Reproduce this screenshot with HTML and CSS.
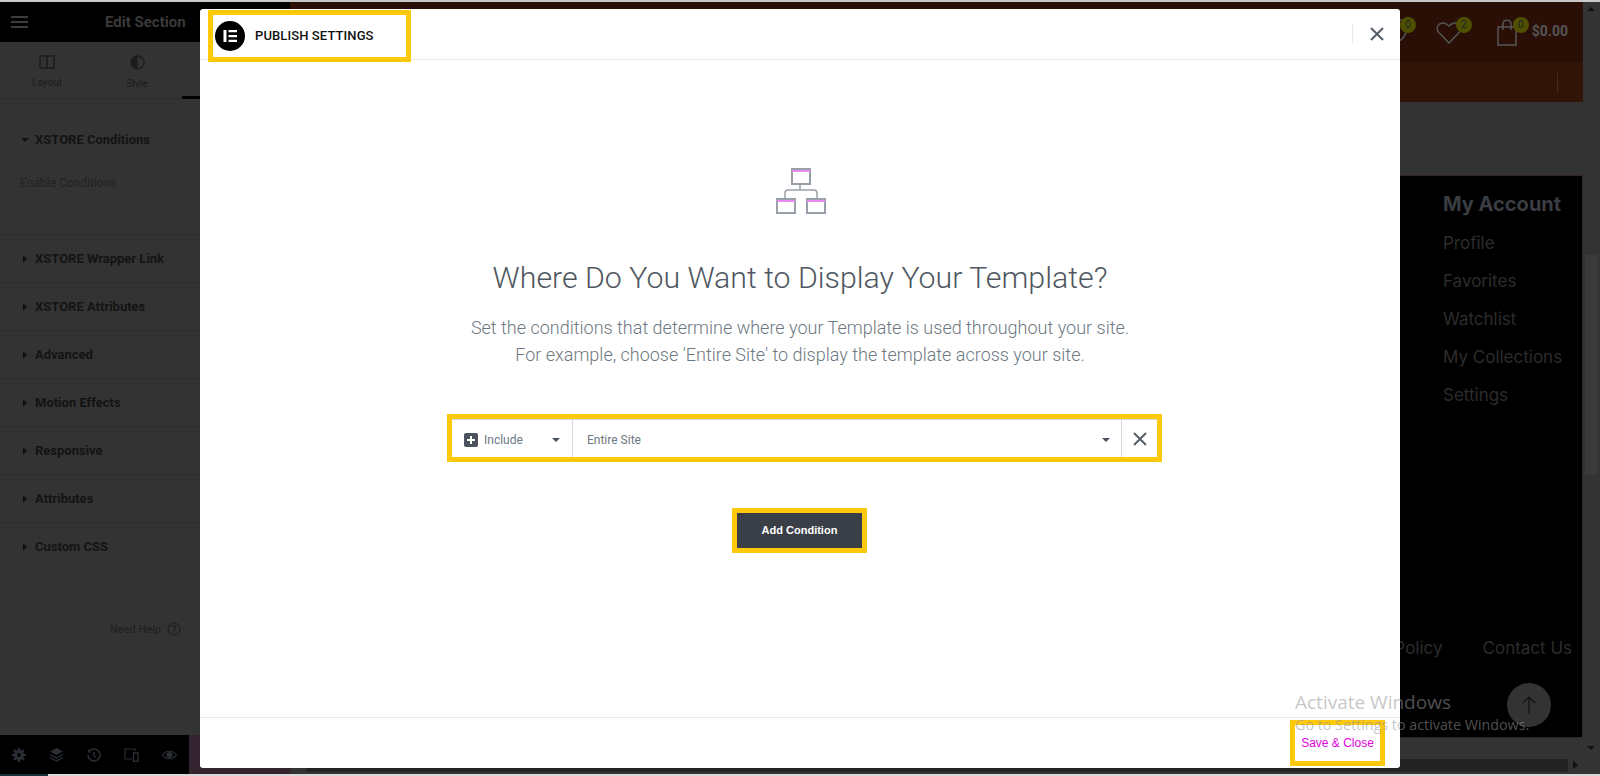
FILE: index.html
```html
<!DOCTYPE html>
<html lang="en">
<head>
    <meta charset="UTF-8">
    <title>Publish Settings</title>
    <link rel="stylesheet" href="styles.css">
</head>
<body>
    <div class="screen">
        <!-- Editor panel -->
        <aside class="panel">
            <div class="panel-head">
                <svg class="burger" width="17" height="12" viewBox="0 0 17 12"><path d="M0 1h17M0 6h17M0 11h17" stroke="#3c3c3c" stroke-width="2"/></svg>
                <span class="panel-title">Edit Section</span>
            </div>
            <div class="tabs">
                <div class="tab">
                    <svg width="16" height="14" viewBox="0 0 16 14"><path d="M1 1h14v12H1zM8 1v12" fill="none" stroke="#1c1c1c" stroke-width="1.5"/></svg>
                    <span>Layout</span>
                </div>
                <div class="tab">
                    <svg width="15" height="15" viewBox="0 0 15 15"><circle cx="7.5" cy="7.5" r="6.5" fill="none" stroke="#1c1c1c" stroke-width="1.4"/><path d="M7.5 1a6.5 6.5 0 0 0 0 13z" fill="#1c1c1c"/></svg>
                    <span>Style</span>
                </div>
                <div class="tab tab-active"></div>
            </div>
            <div class="section section-open">
                <div class="section-label"><i class="caret-down"></i>XSTORE Conditions</div>
                <div class="control-label">Enable Conditions</div>
            </div>
            <div class="section"><div class="section-label"><i class="caret-right"></i>XSTORE Wrapper Link</div></div>
            <div class="section"><div class="section-label"><i class="caret-right"></i>XSTORE Attributes</div></div>
            <div class="section"><div class="section-label"><i class="caret-right"></i>Advanced</div></div>
            <div class="section"><div class="section-label"><i class="caret-right"></i>Motion Effects</div></div>
            <div class="section"><div class="section-label"><i class="caret-right"></i>Responsive</div></div>
            <div class="section"><div class="section-label"><i class="caret-right"></i>Attributes</div></div>
            <div class="section section-last"><div class="section-label"><i class="caret-right"></i>Custom CSS</div></div>
            <div class="need-help">
                <span>Need Help</span>
                <svg width="14" height="14" viewBox="0 0 14 14"><circle cx="7" cy="7" r="6" fill="none" stroke="#1f1f1f" stroke-width="1.1"/><path d="M5.2 5.4C5.3 3 8.8 3.2 8.8 5.3c0 1.500-1.800 1.400-1.800 3M7 9.500v1.200" fill="none" stroke="#1f1f1f" stroke-width="1.100"/></svg>
            </div>
            <div class="panel-foot">
                <div class="foot-icons">
                    <svg width="14" height="14" viewBox="0 0 14 14"><circle cx="7" cy="7" r="3.500" fill="none" stroke="#2a2f35" stroke-width="3"/><path d="M7 0v3M7 11v3M0 7h3M11 7h3M2 2l2 2M10 10l2 2M12 2l-2 2M4 10l-2 2" stroke="#2a2f35" stroke-width="2.200"/></svg>
                    <svg width="15" height="15" viewBox="0 0 15 15"><path d="M7.500 1L14 4.500 7.500 8 1 4.500z" fill="#2a2f35"/><path d="M1 7.500L7.500 11 14 7.500M1 10.500L7.500 14 14 10.500" fill="none" stroke="#2a2f35" stroke-width="1.300"/></svg>
                    <svg width="14" height="14" viewBox="0 0 14 14"><path d="M2.500 3A6 6 0 1 1 1 7" fill="none" stroke="#2a2f35" stroke-width="1.500"/><path d="M1 1v3.500h3.500z" fill="#2a2f35"/><path d="M7 4v3.500l2 1.500" fill="none" stroke="#2a2f35" stroke-width="1.500"/></svg>
                    <svg width="15" height="14" viewBox="0 0 15 14"><path d="M1 10V1h10v2M0 11h8" fill="none" stroke="#2a2f35" stroke-width="1.200"/><path d="M9.500 5h4.500v8.500H9.500z" fill="none" stroke="#2a2f35" stroke-width="1.300"/></svg>
                    <svg width="15" height="10" viewBox="0 0 15 10"><path d="M.5 5C4 0 11 0 14.500 5 11 10 4 10 .5 5z" fill="none" stroke="#2a2f35" stroke-width="1.200"/><circle cx="7.500" cy="5" r="3" fill="#2a2f35"/></svg>
                </div>
            </div>
        </aside>

        <!-- Site preview behind the modal -->
        <main class="site">
            <div class="site-view">
                <header class="site-top">
                    <svg class="user-icon" width="26" height="26" viewBox="0 0 26 26"><circle cx="13" cy="13" r="12" fill="none" stroke="#555" stroke-width="1.500"/></svg>
                    <span class="icon-wrap heart">
                        <svg width="26" height="24" viewBox="0 0 26 24"><path d="M13 23L2.500 12C-2 6 6-1 13 6c7-7 15 0 10.500 6z" fill="none" stroke="#555" stroke-width="1.500"/></svg>
                        <b class="count">2</b>
                    </span>
                    <span class="icon-wrap bag">
                        <svg width="20" height="27" viewBox="0 0 20 27"><path d="M1 8h18v18H1zM6 11V5c0-5 8-5 8 0v6" fill="none" stroke="#555" stroke-width="1.500"/></svg>
                        <b class="count">0</b>
                    </span>
                    <span class="cart-total">$0.00</span>
                    <b class="count count-user">0</b>
                </header>
                <nav class="site-nav"><i class="nav-sep"></i></nav>
                <div class="site-gap"></div>
                <footer class="site-foot">
                    <div class="account">
                        <h3>My Account</h3>
                        <a>Profile</a>
                        <a>Favorites</a>
                        <a>Watchlist</a>
                        <a>My Collections</a>
                        <a>Settings</a>
                    </div>
                    <div class="legal">
                        <a>Privacy Policy</a>
                        <a>Contact Us</a>
                    </div>
                    <div class="to-top">
                        <svg width="14" height="18" viewBox="0 0 14 18"><path d="M7 18V1M1 7l6-6 6 6" fill="none" stroke="#111" stroke-width="1.200"/></svg>
                    </div>
                </footer>
                <div class="hscroll">
                    <div class="hscroll-track"></div>
                    <i class="hscroll-right"></i>
                </div>
            </div>
            <div class="vscroll">
                <i class="arrow-up"></i>
                <div class="vscroll-thumb"></div>
                <i class="arrow-down"></i>
            </div>
        </main>
    </div>
    <div class="taskbar-line"><i></i></div>

    <!-- Publish settings modal -->
    <div class="modal">
        <div class="modal-head">
            <div class="mark head-mark">
                <svg width="30" height="30" viewBox="0 0 30 30"><circle cx="15" cy="15" r="15" fill="#000"/><path d="M8.500 9h3v12h-3zM13.500 9H22v2.300h-8.500zM13.500 13.900H22v2.300h-8.500zM13.500 18.700H22V21h-8.500z" fill="#fff"/></svg>
                <span class="modal-title">PUBLISH SETTINGS</span>
            </div>
            <div class="modal-close">
                <svg width="14" height="14" viewBox="0 0 14 14"><path d="M1 1l12 12M13 1L1 13" stroke="#555d66" stroke-width="2"/></svg>
            </div>
        </div>
        <div class="modal-body">
            <svg class="tree-icon" width="50" height="46" viewBox="0 0 50 46">
                <path d="M24 16v6M9 30v-5q0-3 3-3h26q3 0 3 3v5" fill="none" stroke="#9aa0a9" stroke-width="1.500"/>
                <path d="M16 1h18v15H16zM1 31h18v14H1zM31 31h18v14H31z" fill="none" stroke="#9aa0a9" stroke-width="2"/>
                <path d="M16 2h18v2H16zM1 32h18v2H1zM31 32h18v2H31z" fill="#e98af0"/>
            </svg>
            <h2>Where Do You Want to Display Your Template?</h2>
            <p>Set the conditions that determine where your Template is used throughout your site.<br>For example, choose 'Entire Site' to display the template across your site.</p>
            <div class="mark condition-mark">
                <div class="condition">
                    <div class="cond-type">
                        <svg width="14" height="14" viewBox="0 0 14 14"><rect width="14" height="14" rx="2" fill="#4a525e"/><path d="M7 3v8M3 7h8" stroke="#fff" stroke-width="2"/></svg>
                        <span>Include</span>
                        <i class="select-caret"></i>
                    </div>
                    <div class="cond-value">
                        <span>Entire Site</span>
                        <i class="select-caret"></i>
                    </div>
                    <div class="cond-remove">
                        <svg width="14" height="14" viewBox="0 0 14 14"><path d="M1 1l12 12M13 1L1 13" stroke="#555d66" stroke-width="2"/></svg>
                    </div>
                </div>
            </div>
            <div class="mark add-mark">
                <button class="add-button">Add Condition</button>
            </div>
        </div>
        <div class="modal-foot">
            <div class="mark save-mark">
                <button class="save-button">Save &amp; Close</button>
            </div>
        </div>
    </div>

    <div class="activate">
        <div class="activate-title">Activate Windows</div>
        <div class="activate-text">Go to Settings to activate Windows.</div>
    </div>
</body>
</html>
```

FILE: styles.css
```css
* {
    box-sizing: border-box;
}
html, body {
    margin: 0;
    height: 100%;
}
body {
    width: 1600px;
    height: 776px;
    overflow: hidden;
    position: relative;
    display: flex;
    flex-direction: column;
    background: #333;
    font-family: 'Roboto', sans-serif;
    border-top: 2px solid #c9c9c9;
}
.screen {
    flex: 1;
    display: flex;
    min-height: 0;
}
.taskbar-line {
    height: 2px;
    background: #d8d8d8;
}
.taskbar-line i {
    display: block;
    width: 48px;
    height: 2px;
    background: #16333a;
}

/* editor panel */
.panel {
    width: 290px;
    background: #333;
    display: flex;
    flex-direction: column;
}
.panel-head {
    height: 40px;
    background: #000;
    display: flex;
    align-items: center;
    padding-left: 11px;
}
.panel-title {
    margin-left: 77px;
    font-size: 15px;
    font-weight: 700;
    color: #3a3a3a;
}
.tabs {
    height: 57px;
    display: flex;
    padding-left: 2px;
    border-bottom: 1px solid #2c2c2c;
}
.tab {
    width: 90px;
    display: flex;
    flex-direction: column;
    align-items: center;
    padding-top: 13px;
    gap: 8px;
    font-size: 10px;
    color: #1c1c1c;
}
.tab-active {
    border-bottom: 3px solid #000;
    height: 57px;
}
.section {
    height: 48px;
    border-bottom: 1px solid #2c2c2c;
    display: flex;
    flex-direction: column;
    justify-content: center;
    padding-left: 24px;
    position: relative;
}
.section-open {
    height: 136px;
    justify-content: flex-start;
    padding: 33px 0 0 20px;
}
.section-last {
    border-bottom: 0;
}
.section-label {
    font-size: 13px;
    font-weight: 700;
    color: #131313;
    display: flex;
    align-items: center;
    line-height: 16px;
    padding-left: 11px;
}
.section-open .section-label {
    padding-left: 15px;
}
.control-label {
    margin-top: 27px;
    font-size: 12px;
    line-height: 16px;
    color: #222;
}
.caret-down {
    width: 0;
    height: 0;
    border: 4px solid transparent;
    border-top: 4px solid #111;
    border-bottom: 0;
    position: absolute;
    left: 21px;
    top: 39px;
}
.caret-right {
    width: 0;
    height: 0;
    border: 4px solid transparent;
    border-left: 4px solid #111;
    border-right: 0;
    position: absolute;
    left: 23px;
    top: 20px;
}
.need-help {
    margin-top: 51px;
    width: 181px;
    display: flex;
    justify-content: flex-end;
    align-items: center;
    gap: 6px;
    font-size: 11px;
    color: #1f1f1f;
}
.panel-foot {
    margin-top: auto;
    height: 39px;
    background: #33242f;
}
.foot-icons {
    width: 189px;
    height: 39px;
    background: #000;
    display: flex;
    align-items: center;
    justify-content: space-between;
    padding: 0 12px;
}

/* site preview */
.site {
    flex: 1;
    display: flex;
    min-width: 0;
}
.site-view {
    flex: 1;
    display: flex;
    flex-direction: column;
    min-width: 0;
}
.site-top {
    height: 60px;
    background: #2a0f06;
    display: flex;
    justify-content: flex-end;
    align-items: center;
    padding: 0 15px 0 0;
    position: relative;
}
.user-icon {
    position: absolute;
    left: 1091px;
    top: 15px;
}
.icon-wrap {
    position: relative;
    display: flex;
}
.heart {
    margin-right: 35px;
}
.bag {
    margin-right: 15px;
    padding-top: 1px;
}
.count {
    position: absolute;
    width: 16px;
    height: 16px;
    border-radius: 50%;
    background: #4f4f00;
    color: #222;
    font-size: 10px;
    font-weight: 400;
    line-height: 16px;
    text-align: center;
    top: -3px;
    right: -10px;
}
.bag .count {
    right: -12px;
    top: -1px;
}
.count-user {
    left: 1110px;
    top: 15px;
    right: auto;
}
.cart-total {
    font-size: 14px;
    font-weight: 700;
    color: #555;
    padding-bottom: 2px;
}
.site-nav {
    height: 40px;
    background: #2f1407;
    display: flex;
    justify-content: flex-end;
    align-items: center;
    padding-right: 25px;
}
.nav-sep {
    width: 1px;
    height: 19px;
    background: #4a2a1a;
}
.site-gap {
    height: 73px;
    background: #333;
}
.site-foot {
    flex: 1;
    background: #000;
    border-top: 1px solid #33242f;
    border-right: 1px solid #33242f;
    border-bottom: 1px solid #33242f;
    display: flex;
    flex-direction: column;
    padding: 14px 0 0 1153px;
    font-family: 'Inter', sans-serif;
    color: #2c2c2c;
    position: relative;
}
.account {
    display: flex;
    flex-direction: column;
}
.account h3 {
    margin: 0 0 6px;
    font-size: 20px;
    line-height: 28px;
    font-weight: 700;
    color: #3a3d42;
}
.account a {
    font-size: 17px;
    line-height: 38px;
}
.legal {
    margin: 222px 0 0 -113px;
    display: flex;
    gap: 40px;
    font-size: 17px;
    line-height: 24px;
    white-space: nowrap;
}
.to-top {
    position: absolute;
    left: 1217px;
    top: 507px;
    width: 44px;
    height: 44px;
    border-radius: 50%;
    background: #333;
    display: flex;
    align-items: center;
    justify-content: center;
}
.hscroll {
    height: 36px;
    display: flex;
    align-items: flex-end;
    padding-bottom: 2px;
    background: #333;
}
.hscroll-track {
    flex: 1;
    height: 13px;
    margin-left: 16px;
    background: #232323;
}
.hscroll-right {
    width: 0;
    height: 0;
    margin: 0 5px 3px 5px;
    border: 4px solid transparent;
    border-left: 5px solid #111;
    border-right: 0;
}
.vscroll {
    width: 17px;
    background: #333;
    position: relative;
    overflow: hidden;
}
.vscroll-thumb {
    margin: 253px 2px 0;
    height: 220px;
    background: #3a3a3a;
}
.arrow-up, .arrow-down {
    position: absolute;
    left: 4px;
    width: 0;
    height: 0;
    border: 4px solid transparent;
}
.arrow-up {
    top: 5px;
    border-bottom: 4px solid #111;
    border-top: 0;
}
.arrow-down {
    top: 744px;
    border-top: 4px solid #111;
    border-bottom: 0;
}

/* modal */
.modal {
    position: absolute;
    left: 200px;
    top: 7px;
    width: 1200px;
    height: 759px;
    background: #fff;
    border-radius: 3px;
    display: flex;
    flex-direction: column;
    color: #4f5761;
}
.mark {
    border: 5px solid #ffc90b;
}
.modal-head {
    height: 51px;
    flex-shrink: 0;
    border-bottom: 1px solid #e6e9ec;
    display: flex;
    align-items: flex-start;
    position: relative;
}
.head-mark {
    margin: 1px 0 0 8px;
    width: 203px;
    height: 52px;
    display: flex;
    align-items: center;
    padding-left: 2px;
    gap: 10px;
    position: relative;
}
.modal-title {
    font-size: 13px;
    font-weight: 500;
    color: #111;
    letter-spacing: .1px;
    margin-top: -2px;
}
.modal-close {
    margin: 16px 0 0 auto;
    width: 48px;
    height: 18px;
    border-left: 1px solid #e6e9ec;
    display: flex;
    align-items: center;
    justify-content: center;
}
.modal-body {
    flex: 1;
    display: flex;
    flex-direction: column;
    align-items: center;
    padding-top: 108px;
}
.tree-icon {
    display: block;
    margin-left: 2px;
}
.modal-body h2 {
    margin: 46px 0 0;
    font-size: 30.3px;
    line-height: 36px;
    font-weight: 300;
    color: #4f5761;
}
.modal-body p {
    margin: 18px 0 0;
    font-size: 18px;
    line-height: 27px;
    font-weight: 300;
    text-align: center;
    color: #6d7882;
}
.condition-mark {
    margin: 46px 0 0 9px;
    width: 715px;
    height: 48px;
}
.condition {
    height: 38px;
    display: flex;
    border-top: 1px solid #d5d8dc;
    font-size: 12px;
    color: #6d7882;
}
.cond-type {
    width: 121px;
    border-right: 1px solid #d5d8dc;
    display: flex;
    align-items: center;
    padding: 2px 12px 0;
    gap: 6px;
}
.cond-value {
    width: 549px;
    border-right: 1px solid #d5d8dc;
    display: flex;
    align-items: center;
    padding: 2px 11px 0 14px;
}
.select-caret {
    margin-left: auto;
    width: 0;
    height: 0;
    border: 4px solid transparent;
    border-top: 4px solid #4a525e;
    border-bottom: 0;
}
.cond-remove {
    flex: 1;
    display: flex;
    align-items: center;
    justify-content: center;
}
.add-mark {
    margin: 46px 0 0 -1px;
}
.add-button {
    display: block;
    width: 125px;
    height: 35px;
    border: 0;
    padding: 0 0 2px;
    background: #3a3f47;
    color: #fff;
    font-family: 'Liberation Sans', sans-serif;
    font-size: 11px;
    font-weight: 700;
}
.modal-foot {
    height: 51px;
    flex-shrink: 0;
    border-top: 1px solid #e6e9ec;
    display: flex;
    justify-content: flex-end;
    padding: 2px 15px 0 0;
}
.save-mark {
    width: 95px;
    height: 46px;
}
.save-button {
    width: 100%;
    height: 100%;
    border: 0;
    padding: 0;
    background: none;
    color: #e000e0;
    font-family: 'Liberation Sans', sans-serif;
    font-size: 12px;
}

/* windows watermark, sits over everything */
.activate {
    position: absolute;
    left: 1295px;
    top: 687px;
    color: rgba(150, 150, 150, .55);
    font-family: 'Open Sans', sans-serif;
    pointer-events: none;
}
.activate-title {
    font-size: 19px;
    line-height: 26px;
}
.activate-text {
    font-size: 14.3px;
    line-height: 20px;
}
```
